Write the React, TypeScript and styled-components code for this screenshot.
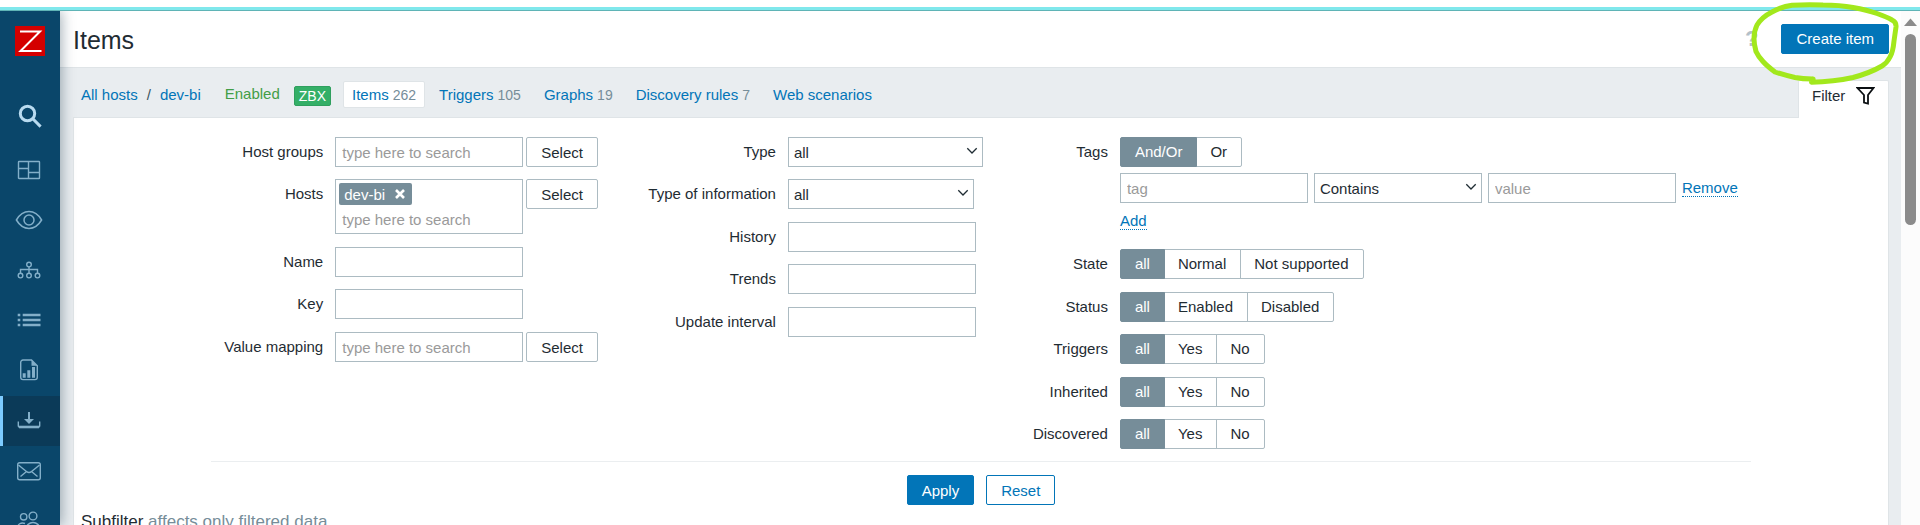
import React from 'react';
import styled, { createGlobalStyle, css } from 'styled-components';

const c = {
  text: '#1f2c33',
  muted: '#768d99',
  border: '#acbbc2',
  line: '#dfe4e7',
  bg: '#e9edf0',
  blue: '#0275b8',
  side: '#0a466a',
};

const GlobalStyle = createGlobalStyle`
  *, *::before, *::after { box-sizing: border-box; }
  html, body { margin: 0; overflow: hidden; }
  body, input, select, button {
    font-family: Arial, "Liberation Sans", sans-serif;
    font-size: 15px;
    color: ${c.text};
  }
`;

const Window = styled.div`
  height: 100vh;
  display: flex;
  flex-direction: column;
  overflow: hidden;
  background: #fff;
`;

const AccentStrip = styled.div`
  flex: none;
  height: 4px;
  margin-top: 7px;
  background: #80e8ec;
  border-bottom: 1px solid #5fb4b6;
`;

const Body = styled.div`
  flex: 1;
  min-height: 0;
  display: flex;
  overflow: hidden;
`;

const Sidebar = styled.aside`
  flex: none;
  width: 60px;
  background: ${c.side};
  box-shadow: 2px 0 12px rgba(10, 40, 60, 0.35);
  z-index: 1;
`;

const Logo = styled.a`
  display: block;
  width: 30px;
  height: 30px;
  margin: 15px 15px 35px;
  svg { display: block; }
`;

const SideLink = styled.a<{ $active?: boolean; $bright?: boolean }>`
  display: block;
  height: 50px;
  padding: 10px 14px;
  color: ${(p) => (p.$bright ? '#b9dbf0' : '#83afc9')};
  ${(p) => p.$bright && css`margin-bottom: 5px;`}
  ${(p) =>
    p.$active &&
    css`
      background: #0b3a58;
      box-shadow: inset 3px 0 0 #7dcbff;
    `}
  svg { display: block; }
`;

const Main = styled.main`
  flex: 1;
  min-width: 0;
  background: ${c.bg};
  display: flex;
  flex-direction: column;
`;

const Header = styled.header`
  flex: none;
  display: flex;
  align-items: center;
  height: 57px;
  padding: 0 12px 0 13px;
  background: #fff;
  border-bottom: 1px solid ${c.line};
`;

const Title = styled.h1`
  flex: 1;
  margin: 0;
  padding-top: 2px;
  font-size: 25px;
  font-weight: 400;
`;

const Tools = styled.div`
  display: flex;
  align-items: center;
  gap: 23px;
  padding-bottom: 1px;
`;

const Help = styled.a`
  font-size: 22px;
  font-weight: 700;
  line-height: 24px;
  color: #b4c0c8;
  text-decoration: none;
`;

const Marker = styled.svg`
  position: absolute;
  top: 0;
  right: 19px;
  z-index: 2;
  pointer-events: none;
`;

const Button = styled.button<{ $kind?: 'primary' | 'outline' }>`
  height: 30px;
  padding: 0 14px;
  border-radius: 2px;
  border: 1px solid ${(p) => (p.$kind ? c.blue : c.border)};
  background: ${(p) => (p.$kind === 'primary' ? c.blue : '#fff')};
  color: ${(p) => (p.$kind === 'primary' ? '#fff' : p.$kind === 'outline' ? c.blue : c.text)};
`;

const NavRow = styled.div`
  flex: none;
  display: flex;
  justify-content: space-between;
  align-items: flex-start;
  height: 49px;
  padding: 12px 12px 0 21px;
`;

const Crumbs = styled.nav`
  display: flex;
  align-items: center;
  height: 29px;
  white-space: nowrap;
`;

const Link = styled.a`
  color: ${c.blue};
  text-decoration: none;
`;

const Slash = styled.span`
  padding: 0 9px;
  color: #3c545f;
`;

const Enabled = styled.span`
  margin: 0 14px 0 24px;
  padding-bottom: 2px;
  color: #429e47;
`;

const Badge = styled.span`
  height: 20px;
  padding: 0 4px;
  margin: 2px 12px 0 0;
  border: 1px solid #2f9f5e;
  border-radius: 2px;
  background: #34af67;
  color: #fff;
  font-size: 14px;
  line-height: 19px;
`;

const Tabs = styled.div`
  display: flex;
  gap: 5px;
`;

const Tab = styled(Link)<{ $active?: boolean }>`
  display: flex;
  align-items: center;
  gap: 4px;
  height: 27px;
  padding: 0 8px;
  border: 1px solid ${(p) => (p.$active ? c.line : 'transparent')};
  border-radius: 2px;
  background: ${(p) => (p.$active ? '#fff' : 'transparent')};
  span {
    font-size: 14px;
    color: ${c.muted};
  }
`;

const FilterTab = styled.button`
  position: relative;
  display: flex;
  justify-content: space-between;
  align-items: flex-start;
  width: 91px;
  height: 38px;
  padding: 5px 13px;
  border: 1px solid ${c.line};
  border-bottom: 0;
  border-radius: 2px 2px 0 0;
  background: #fff;
  line-height: 20px;
`;

const Panel = styled.section`
  flex: 1;
  margin: 0 12px 0 13px;
  border: 1px solid ${c.line};
  border-bottom: 0;
  background: #fff;
`;

const Form = styled.form`
  width: fit-content;
  margin: 0 auto;
  padding-top: 19px;
`;

const Columns = styled.div`
  display: flex;
  gap: 50px;
  padding: 0 13px 12px;
  border-bottom: 1px solid #ebeef0;
`;

const Column = styled.div<{ $label: number }>`
  --label: ${(p) => p.$label}px;
`;

const Row = styled.div`
  display: flex;
  gap: 12px;
  & + & { margin-top: 12px; }
  & + &:nth-child(odd) { margin-top: 13px; }
`;

const Label = styled.label`
  flex: none;
  width: var(--label);
  text-align: right;
  line-height: 29px;
  white-space: nowrap;
`;

const Field = styled.div`
  display: flex;
  align-items: flex-start;
  gap: 3px;
`;

const TextInput = styled.input`
  width: 188px;
  height: 30px;
  padding: 0 6px;
  border: 1px solid ${c.border};
  background: #fff;
  outline: none;
  &::placeholder { color: #9a9a9a; opacity: 1; }
`;

const MultiSelect = styled.div`
  width: 188px;
  border: 1px solid ${c.border};
  background: #fff;
  padding-top: 3px;
  ${TextInput} {
    display: block;
    width: 100%;
    height: 28px;
    border: 0;
    background: transparent;
  }
`;

const Chip = styled.span`
  display: inline-flex;
  align-items: center;
  gap: 10px;
  height: 22px;
  margin-left: 3px;
  padding: 0 7px 0 5px;
  border-radius: 2px;
  background: ${c.muted};
  color: #fff;
  vertical-align: top;
`;

const ChipRemove = styled.button`
  display: block;
  padding: 0;
  border: 0;
  background: none;
  svg { display: block; }
`;

const SelectBox = styled.div<{ $w: number }>`
  position: relative;
  width: ${(p) => p.$w}px;
  select {
    display: block;
    width: 100%;
    height: 30px;
    padding: 0 20px 0 5px;
    border: 1px solid ${c.border};
    border-radius: 0;
    background: #fff;
    appearance: none;
  }
  svg {
    position: absolute;
    top: 10px;
    right: 5px;
    pointer-events: none;
  }
`;

const Segmented = styled.div`
  display: flex;
`;

const Segment = styled.label`
  height: 30px;
  padding: 0 14px;
  border: 1px solid ${c.border};
  line-height: 28px;
  white-space: nowrap;
  & + & {
    margin-left: -1px;
    padding-left: 13px;
  }
  &:first-child { border-radius: 2px 0 0 2px; }
  &:last-child { border-radius: 0 2px 2px 0; }
  input {
    position: absolute;
    opacity: 0;
    pointer-events: none;
  }
  &:has(input:checked) {
    position: relative;
    background: ${c.muted};
    border-color: ${c.muted};
    color: #fff;
  }
`;

const TagsField = styled.div`
  display: flex;
  flex-direction: column;
  gap: 6px;
`;

const TagRow = styled.div`
  display: flex;
  align-items: center;
  gap: 6px;
`;

const AddRow = styled.div`
  display: flex;
  align-items: flex-start;
  height: 28px;
  padding-top: 3px;
`;

const DottedButton = styled.button`
  padding: 0;
  border: 0;
  border-bottom: 1px dotted ${c.blue};
  background: none;
  color: ${c.blue};
  line-height: 17px;
`;

const Actions = styled.div`
  display: flex;
  justify-content: center;
  gap: 12px;
  padding-top: 13px;
`;

const Subfilter = styled.h2`
  margin: 6px 0 0 7px;
  font-size: 17px;
  font-weight: 400;
  line-height: 22px;
  span { color: ${c.muted}; }
`;

const Scrollbar = styled.div`
  flex: none;
  width: 19px;
  padding-top: 7px;
  background: #fcfcfc;
  display: flex;
  flex-direction: column;
  align-items: center;
  gap: 8px;
`;

const Thumb = styled.div`
  width: 11px;
  height: 191px;
  border-radius: 6px;
  background: #8b8b8b;
`;

const Icon = ({ children, w = 1.4 }: { children: React.ReactNode; w?: number }) => (
  <svg width="30" height="30" viewBox="0 0 30 30" fill="none" stroke="currentColor" strokeWidth={w} aria-hidden>
    {children}
  </svg>
);

const sideIcons: { name: string; active?: boolean; icon: React.ReactNode }[] = [
  {
    name: 'Dashboards',
    icon: (
      <Icon>
        <rect x="4.5" y="5.5" width="21" height="17" rx="0.6" />
        <path d="M14.5 5.5v17M4.5 12.5h10M14.5 16.5h11" />
      </Icon>
    ),
  },
  {
    name: 'Monitoring',
    icon: (
      <Icon w={1.5}>
        <path d="M2.4 14C5.6 8.6 10 5.6 15 5.6S24.4 8.6 27.6 14C24.4 19.4 20 22.4 15 22.4S5.6 19.4 2.4 14z" />
        <circle cx="15" cy="14" r="5" />
      </Icon>
    ),
  },
  {
    name: 'Services',
    icon: (
      <Icon>
        <circle cx="15" cy="8.6" r="2.3" />
        <path d="M15 11v6M6.5 17v-3.5h17V17" />
        <circle cx="6.5" cy="19.6" r="2.3" />
        <circle cx="15" cy="19.6" r="2.3" />
        <circle cx="23.5" cy="19.6" r="2.3" />
      </Icon>
    ),
  },
  {
    name: 'Inventory',
    icon: (
      <Icon w={2.4}>
        <path d="M3.7 9h2.6M3.7 14h2.6M3.7 19h2.6M8.7 9h17.8M8.7 14h17.8M8.7 19h17.8" />
      </Icon>
    ),
  },
  {
    name: 'Reports',
    icon: (
      <Icon>
        <path d="M17.5 4H9a2.3 2.3 0 0 0-2.3 2.3v15A2.3 2.3 0 0 0 9 23.6h12a2.3 2.3 0 0 0 2.3-2.3V9.8z" />
        <path d="M17.5 4v5.8h5.8z" fill="currentColor" stroke="none" />
        <path d="M10.2 17.3v4.4M14.8 14.3v7.4M19.5 11v10.7" strokeWidth="3" />
      </Icon>
    ),
  },
  {
    name: 'Data collection',
    active: true,
    icon: (
      <Icon w={2}>
        <path d="M15 6v9" />
        <path d="M10 13h10l-5 5z" fill="currentColor" stroke="none" />
        <path d="M4.3 15.5V20q0 1 1 1h19.4q1 0 1-1v-4.5" strokeWidth="1.4" />
        <path d="M5 21h20" strokeWidth="2.6" />
      </Icon>
    ),
  },
  {
    name: 'Alerts',
    icon: (
      <Icon>
        <rect x="3.7" y="6.7" width="22.6" height="17" rx="2" />
        <path d="M4.500 9Q8 12 12.500 15.500Q15 17.500 17.500 15.500Q22 12 25.500 9M6.500 20.500l6-5M23.500 20.500l-6-5" />
      </Icon>
    ),
  },
  {
    name: 'Users',
    icon: (
      <Icon>
        <circle cx="9.7" cy="10.8" r="3.2" />
        <circle cx="19" cy="10" r="3.9" />
        <path d="M11 17.5c-4-1.500-7.500.5-7.500 5M12 24c0-10 14-10 14 0" />
      </Icon>
    ),
  },
];

const Dropdown = ({ id, w, value, label }: { id: string; w: number; value: string; label?: string }) => (
  <SelectBox $w={w}>
    <select id={id} aria-label={label} defaultValue={value}>
      <option>{value}</option>
    </select>
    <svg width="12" height="8" viewBox="0 0 12 8" fill="none" stroke={c.text} strokeWidth="1.3" aria-hidden>
      <path d="M1.300 1.300L6 6l4.700-4.700" />
    </svg>
  </SelectBox>
);

const Choice = ({ name, options }: { name: string; options: string[] }) => (
  <Segmented role="radiogroup" aria-label={name}>
    {options.map((o, i) => (
      <Segment key={o}>
        <input type="radio" name={name} defaultChecked={i === 0} />
        {o}
      </Segment>
    ))}
  </Segmented>
);

const choices: [string, string[]][] = [
  ['State', ['all', 'Normal', 'Not supported']],
  ['Status', ['all', 'Enabled', 'Disabled']],
  ['Triggers', ['all', 'Yes', 'No']],
  ['Inherited', ['all', 'Yes', 'No']],
  ['Discovered', ['all', 'Yes', 'No']],
];

const tabs: [string, string?][] = [
  ['Items', '262'],
  ['Triggers', '105'],
  ['Graphs', '19'],
  ['Discovery rules', '7'],
  ['Web scenarios'],
];

const SearchField = ({ id }: { id: string }) => (
  <Field>
    <TextInput id={id} placeholder="type here to search" />
    <Button type="button">Select</Button>
  </Field>
);

export default function App() {
  return (
    <>
      <GlobalStyle />
      <Window>
        <AccentStrip />
        <Body>
          <Sidebar>
            <Logo href="#" aria-label="Home">
              <svg width="30" height="30" viewBox="0 0 30 30">
                <rect width="30" height="30" fill="#d40000" />
                <path d="M5 5.5h20L5.5 25h21" fill="none" stroke="#fff" strokeWidth="2" />
              </svg>
            </Logo>
            <SideLink href="#" $bright aria-label="Search">
              <Icon w={3}>
                <circle cx="13.5" cy="12.5" r="7.2" />
                <path d="M18.8 17.8l7.800 7.800" />
              </Icon>
            </SideLink>
            {sideIcons.map((s) => (
              <SideLink key={s.name} href="#" $active={s.active} aria-label={s.name}>
                {s.icon}
              </SideLink>
            ))}
          </Sidebar>
          <Main>
            <Header>
              <Title>Items</Title>
              <Tools>
                <Help href="#" aria-label="Help">?</Help>
                <Button $kind="primary" type="button">Create item</Button>
              </Tools>
            </Header>
            <NavRow>
              <Crumbs>
                <Link href="#">All hosts</Link>
                <Slash>/</Slash>
                <Link href="#">dev-bi</Link>
                <Enabled>Enabled</Enabled>
                <Badge>ZBX</Badge>
                <Tabs>
                  {tabs.map(([name, count], i) => (
                    <Tab key={name} href="#" $active={i === 0}>
                      {name}
                      {count && <span>{count}</span>}
                    </Tab>
                  ))}
                </Tabs>
              </Crumbs>
              <FilterTab type="button">
                Filter
                <svg width="19" height="20" viewBox="0 0 19 20" fill="none" stroke="#0b0f12" strokeWidth="1.8" aria-hidden>
                  <path d="M1.5 2h16L12 9v8.5L8 16.500V9z" />
                </svg>
              </FilterTab>
            </NavRow>
            <Panel>
              <Form onSubmit={(e) => e.preventDefault()}>
                <Columns>
                  <Column $label={99}>
                    <Row>
                      <Label htmlFor="groups">Host groups</Label>
                      <SearchField id="groups" />
                    </Row>
                    <Row>
                      <Label htmlFor="hosts">Hosts</Label>
                      <Field>
                        <MultiSelect>
                          <Chip>
                            dev-bi
                            <ChipRemove type="button" aria-label="Remove dev-bi">
                              <svg width="10" height="10" viewBox="0 0 10 10" stroke="#fff" strokeWidth="2.6">
                                <path d="M1 1l8 8M9 1L1 9" />
                              </svg>
                            </ChipRemove>
                          </Chip>
                          <TextInput id="hosts" placeholder="type here to search" />
                        </MultiSelect>
                        <Button type="button">Select</Button>
                      </Field>
                    </Row>
                    <Row>
                      <Label htmlFor="name">Name</Label>
                      <TextInput id="name" />
                    </Row>
                    <Row>
                      <Label htmlFor="key">Key</Label>
                      <TextInput id="key" />
                    </Row>
                    <Row>
                      <Label htmlFor="mapping">Value mapping</Label>
                      <SearchField id="mapping" />
                    </Row>
                  </Column>
                  <Column $label={128}>
                    <Row>
                      <Label htmlFor="type">Type</Label>
                      <Dropdown id="type" w={195} value="all" />
                    </Row>
                    <Row>
                      <Label htmlFor="info">Type of information</Label>
                      <Dropdown id="info" w={186} value="all" />
                    </Row>
                    {['History', 'Trends', 'Update interval'].map((n) => (
                      <Row key={n}>
                        <Label htmlFor={n}>{n}</Label>
                        <TextInput id={n} />
                      </Row>
                    ))}
                  </Column>
                  <Column $label={75}>
                    <Row>
                      <Label as="span">Tags</Label>
                      <TagsField>
                        <Choice name="Tags" options={['And/Or', 'Or']} />
                        <TagRow>
                          <TextInput placeholder="tag" aria-label="Tag" />
                          <Dropdown id="operator" w={168} value="Contains" label="Operator" />
                          <TextInput placeholder="value" aria-label="Value" />
                          <DottedButton type="button">Remove</DottedButton>
                        </TagRow>
                        <AddRow>
                          <DottedButton type="button">Add</DottedButton>
                        </AddRow>
                      </TagsField>
                    </Row>
                    {choices.map(([name, options]) => (
                      <Row key={name}>
                        <Label as="span">{name}</Label>
                        <Choice name={name} options={options} />
                      </Row>
                    ))}
                  </Column>
                </Columns>
                <Actions>
                  <Button $kind="primary" type="submit">Apply</Button>
                  <Button $kind="outline" type="reset">Reset</Button>
                </Actions>
              </Form>
              <Subfilter>
                Subfilter <span>affects only filtered data</span>
              </Subfilter>
            </Panel>
          </Main>
          <Scrollbar aria-hidden>
            <svg width="13" height="8" viewBox="0 0 13 8">
              <path d="M6.5 0.5L13 8H0z" fill="#8b8b8b" />
            </svg>
            <Thumb />
          </Scrollbar>
        </Body>
        <Marker width="151" height="90" viewBox="0 0 151 90" fill="none" stroke="#a2e81c" strokeWidth="5" strokeLinecap="round" strokeLinejoin="round" aria-hidden>
          <path d="M62.500 79C56 79 50 78.500 45 77.500Q34 75 25 72Q17 66 13 61.500Q8 56 6 51.500Q4 44 4 39Q4 31 7 25Q12 17 22 12Q32 6.500 42 5.200Q58 4.200 73 5Q90 5 103 7.500Q117 10 127 13.500Q137 17 142 20Q146.500 22 146 27L144 41Q143 52 140 57Q137 63 132 66Q120 73 103 77.500Q92 80 83 80.800Q72 82 61.500 82.300L63 79" />
        </Marker>
      </Window>
    </>
  );
}
